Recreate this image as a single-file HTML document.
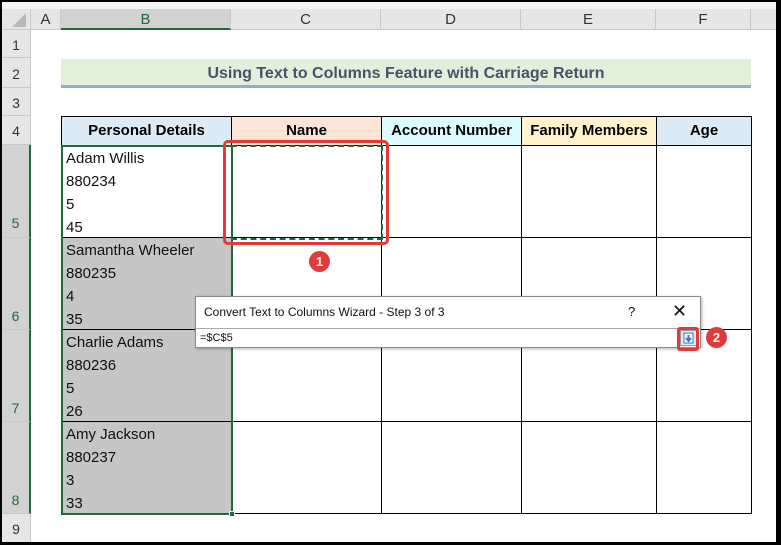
<!DOCTYPE html>
<html><head><style>
body{margin:0;width:781px;height:545px;overflow:hidden;background:#000;font-family:"Liberation Sans",Calibri,sans-serif;position:relative}
div{position:absolute;box-sizing:border-box}
.sheet{left:2px;top:2px;width:774px;height:540px;background:#fff;overflow:hidden}
.ch{top:7px;height:21px;background:#e6e6e6;border-right:1px solid #c8c8c8;border-bottom:1px solid #c8c8c8;text-align:center;line-height:21px;font-size:15px;color:#333}
.rh{left:0;width:29px;background:#e6e6e6;border-bottom:1px solid #c8c8c8;border-right:1px solid #c8c8c8;text-align:center;font-size:14px;color:#333}
.c{border-right:1px solid #000;border-bottom:1px solid #000}
.h{font-weight:bold;font-size:15px;text-align:center;line-height:28px;color:#000}
.txt{font-size:15px;line-height:23px;padding-left:4px;padding-top:1px;color:#111}
.circ{width:21px;height:21px;border-radius:50%;background:#e03a3a;color:#fff;font-weight:bold;font-size:13px;text-align:center;line-height:21px}
</style></head><body>
<div class="sheet">
<div style="left:0;top:0;width:774px;height:7px;background:#f4f4f4"></div>
<!-- col headers -->
<div class="ch" style="left:0;width:29px"><svg width="29" height="21"><polygon points="24,4 24,18 10,18" fill="#b8b8b8"/></svg></div>
<div class="ch" style="left:29px;width:30px">A</div>
<div class="ch" style="left:59px;width:170px;background:#d2d2d2;color:#21683f;border-bottom:2px solid #21683f">B</div>
<div class="ch" style="left:229px;width:150px">C</div>
<div class="ch" style="left:379px;width:140px">D</div>
<div class="ch" style="left:519px;width:135px">E</div>
<div class="ch" style="left:654px;width:95px">F</div>
<div class="ch" style="left:749px;width:30px"></div>
<!-- row headers -->
<div class="rh" style="top:28px;height:28px;line-height:30px">1</div>
<div class="rh" style="top:56px;height:30px;line-height:32px">2</div>
<div class="rh" style="top:86px;height:28px;line-height:30px">3</div>
<div class="rh" style="top:114px;height:29px;line-height:31px">4</div>
<div class="rh" style="top:143px;height:93px;background:#d2d2d2;color:#21683f;border-right:2px solid #21683f;padding-top:70px">5</div>
<div class="rh" style="top:236px;height:92px;background:#d2d2d2;color:#21683f;border-right:2px solid #21683f;padding-top:70px">6</div>
<div class="rh" style="top:328px;height:92px;background:#d2d2d2;color:#21683f;border-right:2px solid #21683f;padding-top:70px">7</div>
<div class="rh" style="top:420px;height:92px;background:#d2d2d2;color:#21683f;border-right:2px solid #21683f;padding-top:70px">8</div>
<div class="rh" style="top:512px;height:30px;line-height:30px">9</div>
<!-- title -->
<div style="left:59px;top:57px;width:690px;height:29px;background:#e2efda;border-bottom:3px solid #8ea9db;text-align:center;font-weight:bold;font-size:16px;line-height:29px;color:#44546a">Using Text to Columns Feature with Carriage Return</div>
<!-- table headers -->
<div style="left:59px;top:114px;width:691px;height:1px;background:#000"></div>
<div style="left:59px;top:114px;width:1px;height:398px;background:#000"></div>
<div class="c h" style="left:60px;top:115px;width:170px;height:29px;background:#ddebf7">Personal Details</div>
<div class="c h" style="left:230px;top:115px;width:150px;height:29px;background:#fce4d6">Name</div>
<div class="c h" style="left:380px;top:115px;width:140px;height:29px;background:#ddfcff">Account Number</div>
<div class="c h" style="left:520px;top:115px;width:135px;height:29px;background:#fff2cc">Family Members</div>
<div class="c h" style="left:655px;top:115px;width:95px;height:29px;background:#ddebf7">Age</div>
<!-- body rows -->
<div class="c txt" style="left:60px;top:144px;width:170px;height:92px;background:#fff">Adam Willis<br>880234<br>5<br>45</div>
<div class="c txt" style="left:60px;top:236px;width:170px;height:92px;background:#c6c6c6">Samantha Wheeler<br>880235<br>4<br>35</div>
<div class="c txt" style="left:60px;top:328px;width:170px;height:92px;background:#c6c6c6">Charlie Adams<br>880236<br>5<br>26</div>
<div class="c txt" style="left:60px;top:420px;width:170px;height:92px;background:#c6c6c6">Amy Jackson<br>880237<br>3<br>33</div>
<div class="c" style="left:230px;top:144px;width:150px;height:92px"></div>
<div class="c" style="left:380px;top:144px;width:140px;height:92px"></div>
<div class="c" style="left:520px;top:144px;width:135px;height:92px"></div>
<div class="c" style="left:655px;top:144px;width:95px;height:92px"></div>
<div class="c" style="left:230px;top:236px;width:150px;height:92px"></div>
<div class="c" style="left:380px;top:236px;width:140px;height:92px"></div>
<div class="c" style="left:520px;top:236px;width:135px;height:92px"></div>
<div class="c" style="left:655px;top:236px;width:95px;height:92px"></div>
<div class="c" style="left:230px;top:328px;width:150px;height:92px"></div>
<div class="c" style="left:380px;top:328px;width:140px;height:92px"></div>
<div class="c" style="left:520px;top:328px;width:135px;height:92px"></div>
<div class="c" style="left:655px;top:328px;width:95px;height:92px"></div>
<div class="c" style="left:230px;top:420px;width:150px;height:92px"></div>
<div class="c" style="left:380px;top:420px;width:140px;height:92px"></div>
<div class="c" style="left:520px;top:420px;width:135px;height:92px"></div>
<div class="c" style="left:655px;top:420px;width:95px;height:92px"></div>
<!-- selection -->
<div style="left:59px;top:143px;width:172px;height:370px;border:2px solid #21683f"></div>
<div style="left:227px;top:509px;width:6px;height:6px;background:#21683f;border:1px solid #fff"></div>
<!-- marching ants -->
<div style="left:229px;top:143px;width:152px;height:95px;border:2px dashed #21683f"></div>
<div style="left:221px;top:138px;width:166px;height:105px;border:3px solid #e03a3a;border-radius:5px"></div>
<div class="circ" style="left:307px;top:249px">1</div>
<!-- dialog -->
<div style="left:193px;top:294px;width:506px;height:52px;background:#fff;border:1px solid #8a8a8a;box-shadow:1px 1px 3px rgba(0,0,0,.3)">
 <div style="left:8px;top:8px;font-size:12px;color:#111">Convert Text to Columns Wizard - Step 3 of 3</div>
 <div style="left:432px;top:7px;font-size:13px;color:#111">?</div>
 <div style="left:476px;top:4px;font-size:18px;color:#111">✕</div>
 <div style="left:0;top:31px;width:504px;height:19px;border-top:1px solid #aaa;font-size:11px;line-height:18px;padding-left:4px;color:#111">=$C$5</div>
 <div style="left:484px;top:33px;width:17px;height:16px;background:#e8e8e8;border:1px solid #999"><svg width="15" height="14"><rect x="3" y="2" width="9" height="10" fill="#fff" stroke="#3a78c0"/><path d="M7.5 4v5M5 7l2.5 3 2.5-3" stroke="#3a78c0" stroke-width="2" fill="none"/></svg></div>
</div>
<div style="left:675px;top:325px;width:22px;height:24px;border:3px solid #e03a3a;border-radius:3px"></div>
<div class="circ" style="left:704px;top:325px">2</div>
</div>
</body></html>
